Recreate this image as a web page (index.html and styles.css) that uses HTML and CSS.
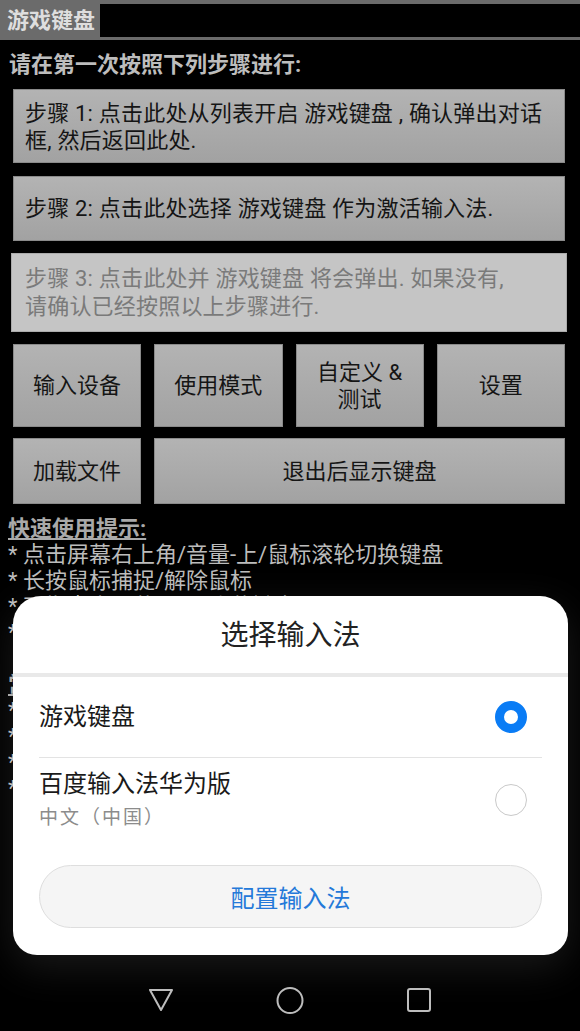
FILE: index.html
```html
<!DOCTYPE html>
<html lang="zh-CN">
<head>
    <meta charset="UTF-8">
    <meta name="viewport" content="width=device-width, initial-scale=1.0">
    <title>游戏键盘</title>
    <link rel="stylesheet" href="styles.css">
</head>
<body>
    <div class="screen">
        <!-- Titelleiste -->
        <div class="title-bar"><span class="app-title">游戏键盘</span></div>

        <div class="main">
            <p class="intro">请在第一次按照下列步骤进行:</p>

            <div class="step step-one">步骤 1: 点击此处从列表开启 游戏键盘 , 确认弹出对话<br>框, 然后返回此处.</div>
            <div class="step step-two">步骤 2: 点击此处选择 游戏键盘 作为激活输入法.</div>
            <div class="step step-three">步骤 3: 点击此处并 游戏键盘 将会弹出. 如果没有,<br>请确认已经按照以上步骤进行.</div>

            <div class="button-grid">
                <div class="btn">输入设备</div>
                <div class="btn">使用模式</div>
                <div class="btn">自定义 &amp;<br>测试</div>
                <div class="btn">设置</div>
                <div class="btn">加载文件</div>
                <div class="btn btn-wide">退出后显示键盘</div>
            </div>

            <div class="tips">
                <div class="tips-head">快速使用提示:</div>
                <div>* 点击屏幕右上角/音量-上/鼠标滚轮切换键盘</div>
                <div>* 长按鼠标捕捉/解除鼠标</div>
                <div>* 双指点击屏幕显示/隐藏键盘</div>
                <div>* 在设置中调整键盘透明度</div>
                <div class="tips-head tips-gap">常见问题:</div>
                <div>* 如果键盘没有弹出, 请重复以上步骤</div>
                <div>* 部分游戏需要关闭全屏模式</div>
                <div>* 可在设置中更改按键布局</div>
                <div>* 按返回键退出游戏键盘</div>
            </div>
        </div>

        <!-- Navigationsleiste -->
        <div class="nav-bar">
            <svg width="26" height="26" viewBox="0 0 26 26"><path d="M2 3 L24 3 L13 23 Z" fill="none" stroke="#bdbdbd" stroke-width="2" stroke-linejoin="round"/></svg>
            <svg width="28" height="27" viewBox="0 0 28 27"><ellipse cx="14" cy="13.5" rx="12.5" ry="12.5" fill="none" stroke="#bdbdbd" stroke-width="2"/></svg>
            <svg width="26" height="26" viewBox="0 0 26 26"><rect x="2" y="2" width="22" height="22" rx="2" fill="none" stroke="#bdbdbd" stroke-width="2"/></svg>
        </div>

        <!-- Dialog: Eingabemethode wählen -->
        <div class="dialog">
            <div class="dialog-title">选择输入法</div>
            <ul class="ime-list">
                <li class="ime-item ime-first">
                    <div class="ime-text"><span class="ime-name">游戏键盘</span></div>
                    <span class="radio checked"></span>
                </li>
                <li class="ime-item ime-second">
                    <div class="ime-text">
                        <span class="ime-name">百度输入法华为版</span>
                        <span class="ime-sub">中文（中国）</span>
                    </div>
                    <span class="radio"></span>
                </li>
            </ul>
            <button type="button" class="config-btn">配置输入法</button>
        </div>
    </div>
</body>
</html>
```

FILE: styles.css
```css
/* Grundlayout */
body {
    margin: 0;
    background-color: #000;
    font-family: Roboto, "Noto Sans CJK SC", sans-serif;
}

.screen {
    position: relative;
    height: 1031px;
    display: flex;
    flex-direction: column;
    overflow: hidden;
}

/* Titelleiste */
.title-bar {
    display: flex;
    height: 33px;
    border-top: 4px solid #6b6b6b;
    border-bottom: 3px solid #6b6b6b;
}

.app-title {
    background-color: #6b6b6b;
    color: #dedede;
    font-weight: bold;
    font-size: 22px;
    line-height: 33px;
    padding: 0 5px 0 7px;
}

/* Hauptbereich */
.main {
    flex: 1;
    padding: 0 15px 0 13px;
    overflow: hidden;
}

.intro {
    margin: 10px 0 9px -4px;
    font-size: 22px;
    line-height: 30px;
    font-weight: bold;
    color: #bdbdbd;
}

.step {
    background: linear-gradient(#b3b3b3, #a2a2a2);
    border: 1px solid #8a8a8a;
    color: #151515;
    font-size: 22px;
    line-height: 27px;
    padding: 10px 11px 8px;
    margin-bottom: 13px;
    letter-spacing: 0.2px;
}

.step-two {
    padding: 18px 11px;
    margin-bottom: 12px;
}

.step-three {
    margin: 0 -2px 12px;
    padding: 11px 13px 10px;
    line-height: 28px;
    background: #c5c5c5;
    border-color: #ababab;
    color: #7a7a7a;
}

/* Knopfraster */
.button-grid {
    display: grid;
    grid-template-columns: repeat(4, 1fr);
    grid-template-rows: 83px 66px;
    gap: 11px 13px;
}

.btn {
    display: flex;
    align-items: center;
    justify-content: center;
    text-align: center;
    background: linear-gradient(#b3b3b3, #a2a2a2);
    border: 1px solid #8a8a8a;
    color: #151515;
    font-size: 22px;
    line-height: 27px;
}

.btn-wide {
    grid-column: span 3;
}

/* Hinweise */
.tips {
    margin: 12px 0 0 -5px;
    font-size: 22px;
    line-height: 26px;
    color: #bcbcbc;
    white-space: nowrap;
}

.tips-head {
    font-weight: bold;
    text-decoration: underline;
    color: #a9a9a9;
}

.tips-gap {
    margin-top: 26px;
}

/* Navigationsleiste */
.nav-bar {
    height: 62px;
    display: flex;
    justify-content: center;
    align-items: center;
    gap: 102px;
}

/* Dialog */
.dialog {
    position: absolute;
    left: 13px;
    top: 596px;
    width: 555px;
    box-sizing: border-box;
    padding-bottom: 27px;
    background-color: #fff;
    border-radius: 28px 28px 24px 24px;
    box-shadow: 0 12px 40px rgba(255, 255, 255, 0.1);
}

.dialog-title {
    height: 77px;
    line-height: 80px;
    text-align: center;
    font-size: 28px;
    color: #222;
    border-bottom: 4px solid #e9e9e9;
}

.ime-list {
    list-style: none;
    margin: 0;
    padding: 0 26px;
}

.ime-item {
    display: flex;
    align-items: center;
    justify-content: space-between;
    padding-right: 15px;
}

.ime-first {
    height: 80px;
}

.ime-second {
    border-top: 1px solid #e3e3e3;
    padding-top: 10px;
    padding-bottom: 10px;
}

.ime-name {
    display: block;
    font-size: 24px;
    line-height: 32px;
    color: #1a1a1a;
}

.ime-sub {
    display: block;
    margin-top: 5px;
    font-size: 19px;
    line-height: 26px;
    letter-spacing: 2px;
    color: #8c8c8c;
}

.radio {
    width: 32px;
    height: 32px;
    box-sizing: border-box;
    border-radius: 50%;
    border: 1.5px solid #c9c9c9;
}

.radio.checked {
    border: 9px solid #0a7cf5;
}

.config-btn {
    display: block;
    width: calc(100% - 52px);
    height: 63px;
    margin: 24px 26px 0;
    border: 1px solid #dedede;
    border-radius: 32px;
    background-color: #f5f5f5;
    color: #2479d9;
    font-family: inherit;
    font-size: 24px;
}
```
